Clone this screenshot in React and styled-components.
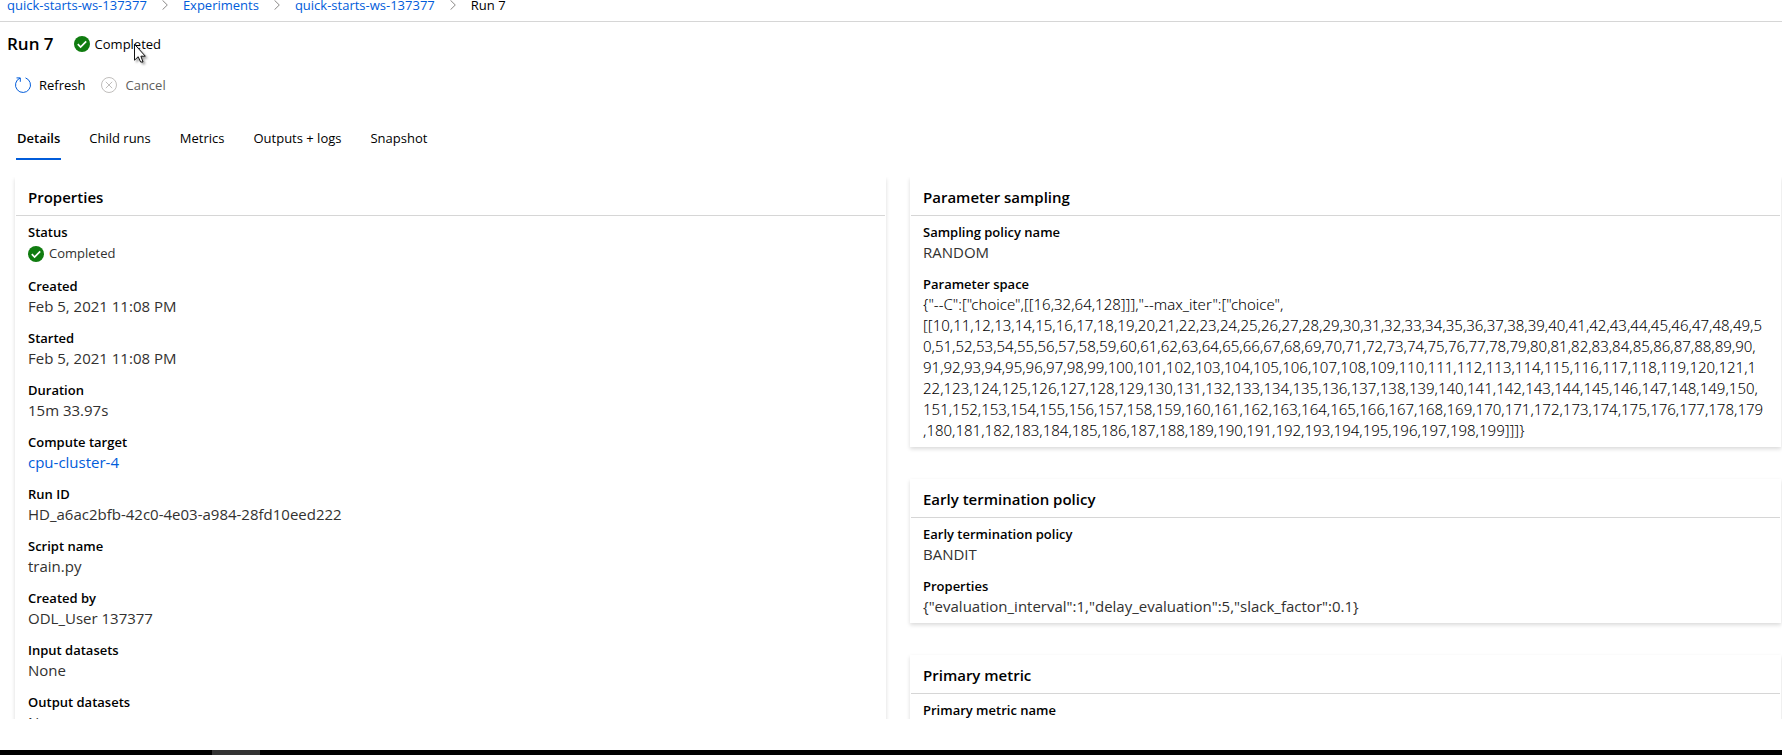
import React, { Fragment } from "react";
import styled, { createGlobalStyle, css } from "styled-components";

const GlobalStyle = createGlobalStyle`
  * { box-sizing: border-box; }
  body {
    margin: 0;
    background: #fff;
    color: #000;
    font: 400 13px/20px "Open Sans", "Noto Sans", sans-serif;
  }
`;

const Page = styled.div`
  display: flex;
  flex-direction: column;
  height: 100vh;
  overflow: hidden;
`;

const Breadcrumb = styled.nav`
  display: flex;
  align-items: center;
  gap: 15px;
  padding: 0 7px 11px;
  border-bottom: 1px solid #d6d6d6;
  line-height: 10px;
  white-space: nowrap;
`;

const Link = styled.a`
  color: #015cda;
  text-decoration: none;
`;

const TitleRow = styled.header`
  display: flex;
  align-items: center;
  gap: 20px;
  padding: 10px 7px;
`;

const Title = styled.h1`
  margin: 0;
  font-size: 17px;
  line-height: 24px;
  font-weight: 600;
`;

const StatusLabel = styled.span`
  display: flex;
  align-items: center;
  gap: 5px;
  line-height: ${(p) => (p.$tall ? "23px" : "20px")};
  font-size: 13px;
`;

const Toolbar = styled.div`
  display: flex;
  gap: 16px;
  padding: 9px 15px;
`;

const ToolButton = styled.button`
  display: flex;
  align-items: center;
  gap: 8px;
  padding: 0;
  border: 0;
  background: none;
  font: inherit;
  color: #000;
  &:disabled { color: #605e5c; }
`;

const Tabs = styled.div`
  display: flex;
  gap: 27px;
  padding: 24px 16px 17px;
`;

const Tab = styled.button`
  padding: 0 1px 10px;
  border: 0;
  border-bottom: 2px solid transparent;
  background: none;
  font: inherit;
  line-height: 20px;
  color: #000;
  ${(p) =>
    p.$active &&
    css`
      border-color: #015cda;
      font-weight: 600;
    `}
`;

const Content = styled.main`
  display: grid;
  grid-template-columns: 1fr 1fr;
  gap: 24px;
  flex: 1;
  min-height: 0;
  margin-bottom: 31px;
  padding: 0 1px 0 15px;
  overflow: hidden;
`;

const Column = styled.div`
  display: flex;
  flex-direction: column;
  gap: 32px;
  min-width: 0;
`;

const Card = styled.section`
  padding: 0 1px 6px;
  background: #fff;
  box-shadow: 0 2px 4px rgba(0, 0, 0, 0.15);
`;

const CardTitle = styled.h2`
  margin: 0 0 7px;
  padding: 10px 12px 8px;
  border-bottom: 1px solid #d6d6d6;
  font-size: 15px;
  line-height: 20px;
  font-weight: 600;
`;

const Fields = styled.dl`
  display: flex;
  flex-direction: column;
  gap: 12px;
  margin: 0;
  padding: 0 10px 0 12px;
`;

const FieldName = styled.dt`
  font-size: 13px;
  line-height: 19px;
  font-weight: 600;
`;

const FieldValue = styled.dd`
  margin: 0;
  font-size: 15px;
  line-height: 21px;
  color: #323130;
  overflow-wrap: anywhere;
`;

const LongValue = styled.div`
  font-family: "Noto Sans", sans-serif;
  font-weight: 300;
  color: #000;
`;

const Taskbar = styled.footer`
  flex: none;
  height: 5px;
  padding-left: 212px;
  background: #000;
`;

const TaskbarItem = styled.div`
  width: 48px;
  height: 5px;
  background: #333;
`;

const Pointer = styled.svg`
  position: absolute;
  left: 133px;
  top: 43px;
  filter: drop-shadow(2px 2px 1px rgba(0, 0, 0, 0.35));
`;

const Chevron = () => (
  <svg width="6" height="10" viewBox="0 0 6 10" fill="none" stroke="#8a8886" aria-hidden="true">
    <path d="M.5 .3 5.3 5 .5 9.7" />
  </svg>
);

const CheckIcon = () => (
  <svg width="16" height="16" viewBox="0 0 16 16" aria-hidden="true">
    <circle cx="8" cy="8" r="8" fill="#107c10" />
    <path d="M3.8 8.2 6.6 11 12.2 5.4" fill="none" stroke="#fff" strokeWidth="1.7" />
  </svg>
);

const RefreshIcon = () => (
  <svg width="16" height="16" viewBox="0 0 16 16" fill="none" stroke="#015cda" aria-hidden="true">
    <path d="M10.5 .9A7.5 7.5 0 1 1 5 1.1" />
    <path d="M1.5 .9H5.3V4.8" />
  </svg>
);

const CancelIcon = () => (
  <svg width="16" height="16" viewBox="0 0 16 16" fill="none" stroke="#c0bebc" aria-hidden="true">
    <circle cx="8" cy="8" r="7.5" />
    <path d="M4.8 4.8 11.2 11.2M11.2 4.8 4.8 11.2" />
  </svg>
);

const Completed = ({ tall }) => (
  <StatusLabel $tall={tall}>
    <CheckIcon />
    Completed
  </StatusLabel>
);

const range = (from, to) =>
  Array.from({ length: to - from + 1 }, (_, i) => from + i).join(",");

// The preferred wrap points of the long list of choices.
const parameterSpace = [
  '{"--C":["choice",[[16,32,64,128]]],"--max_iter":["choice",',
  `[[${range(10, 49)},5`,
  `0,${range(51, 90)},`,
  `${range(91, 121)},1`,
  `22,${range(123, 150)},`,
  range(151, 179),
  `,${range(180, 199)}]]]}`,
];

const properties = [
  ["Status", <Completed tall />],
  ["Created", "Feb 5, 2021 11:08 PM"],
  ["Started", "Feb 5, 2021 11:08 PM"],
  ["Duration", "15m 33.97s"],
  ["Compute target", <Link href="#compute">cpu-cluster-4</Link>],
  ["Run ID", "HD_a6ac2bfb-42c0-4e03-a984-28fd10eed222"],
  ["Script name", "train.py"],
  ["Created by", "ODL_User 137377"],
  ["Input datasets", "None"],
  ["Output datasets", "None"],
];

const sampling = [
  ["Sampling policy name", "RANDOM"],
  [
    "Parameter space",
    <LongValue>
      {parameterSpace.map((part) => (
        <Fragment key={part}>
          {part}
          <wbr />
        </Fragment>
      ))}
    </LongValue>,
  ],
];

const termination = [
  ["Early termination policy", "BANDIT"],
  ["Properties", '{"evaluation_interval":1,"delay_evaluation":5,"slack_factor":0.1}'],
];

const metric = [["Primary metric name", "Accuracy"]];

const tabs = ["Details", "Child runs", "Metrics", "Outputs + logs", "Snapshot"];

const FieldCard = ({ title, fields }) => (
  <Card>
    <CardTitle>{title}</CardTitle>
    <Fields>
      {fields.map(([name, value]) => (
        <div key={name}>
          <FieldName>{name}</FieldName>
          <FieldValue>{value}</FieldValue>
        </div>
      ))}
    </Fields>
  </Card>
);

export default function App() {
  return (
    <Page>
      <GlobalStyle />
      <Breadcrumb aria-label="Breadcrumb">
        <Link href="#workspace">quick-starts-ws-137377</Link>
        <Chevron />
        <Link href="#experiments">Experiments</Link>
        <Chevron />
        <Link href="#experiment">quick-starts-ws-137377</Link>
        <Chevron />
        <span>Run 7</span>
      </Breadcrumb>
      <TitleRow>
        <Title>Run 7</Title>
        <Completed />
      </TitleRow>
      <Toolbar>
        <ToolButton type="button"><RefreshIcon />Refresh</ToolButton>
        <ToolButton type="button" disabled><CancelIcon />Cancel</ToolButton>
      </Toolbar>
      <Tabs role="tablist">
        {tabs.map((name, i) => (
          <Tab key={name} type="button" role="tab" aria-selected={i === 0} $active={i === 0}>
            {name}
          </Tab>
        ))}
      </Tabs>
      <Content>
        <Column>
          <FieldCard title="Properties" fields={properties} />
        </Column>
        <Column>
          <FieldCard title="Parameter sampling" fields={sampling} />
          <FieldCard title="Early termination policy" fields={termination} />
          <FieldCard title="Primary metric" fields={metric} />
        </Column>
      </Content>
      <Taskbar>
        <TaskbarItem />
      </Taskbar>
      <Pointer width="13" height="20" viewBox="0 0 13 20" aria-hidden="true">
        <path d="M1.5 1.2V17.2L5.2 13.7 7.6 19H10L7.9 13.2H12.3Z" fill="#fff" stroke="#111" />
      </Pointer>
    </Page>
  );
}
